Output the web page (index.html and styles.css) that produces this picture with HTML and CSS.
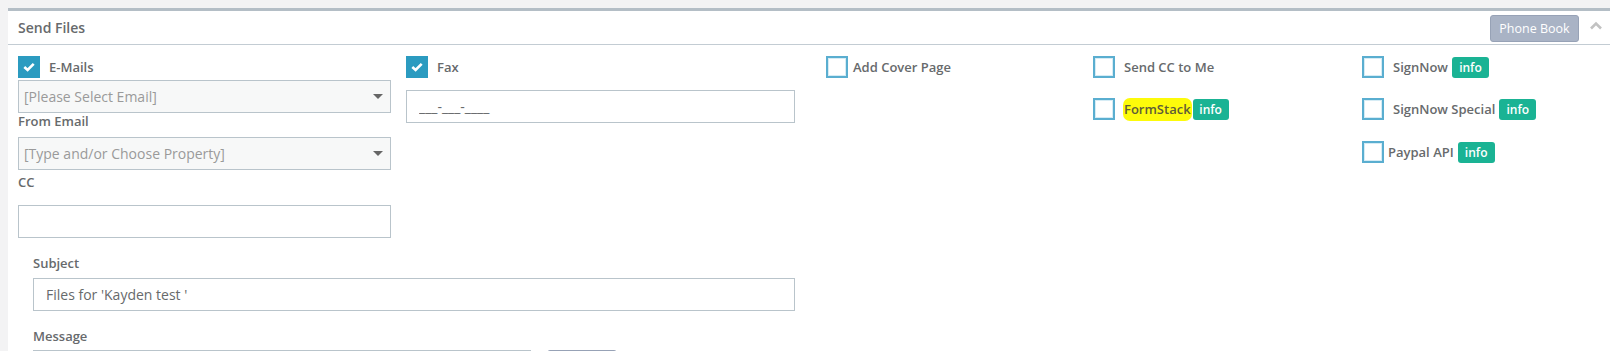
FILE: index.html
```html
<!DOCTYPE html>
<html lang="en">
<head>
  <meta charset="UTF-8">
  <meta name="viewport" content="width=device-width, initial-scale=1.0">
  <title>Send Files</title>
  <link rel="stylesheet" href="styles.css">
</head>
<body>
  <div class="panel">
    <div class="panel-head">
      <h5>Send Files</h5>
      <div class="tools">
        <button class="btn-gray">Phone Book</button>
        <svg class="collapse" width="14" height="9" viewBox="0 0 14 9"><polyline points="2,7.5 7,2.5 12,7.5" fill="none" stroke="#c2c2c2" stroke-width="2.6"/></svg>
      </div>
    </div>

    <div class="panel-body">
      <div class="options">
        <!-- E-Mails -->
        <div class="col col-email">
          <label class="check">
            <span class="box on"><svg width="12" height="10" viewBox="0 0 12 10"><polyline points="1.3,5 4.6,8 10.7,1.8" fill="none" stroke="#fff" stroke-width="2.6"/></svg></span>
            <span class="txt">E-Mails</span>
          </label>
          <div class="select">
            <span>[Please Select Email]</span>
            <svg width="10" height="6" viewBox="0 0 10 6"><polygon points="0,0 10,0 5,5" fill="#666"/></svg>
          </div>
          <div class="field-label">From Email</div>
          <div class="select">
            <span>[Type and/or Choose Property]</span>
            <svg width="10" height="6" viewBox="0 0 10 6"><polygon points="0,0 10,0 5,5" fill="#666"/></svg>
          </div>
          <div class="field-label cc">CC</div>
          <input class="text cc-input" type="text">
        </div>

        <!-- Fax -->
        <div class="col col-fax">
          <label class="check">
            <span class="box on"><svg width="12" height="10" viewBox="0 0 12 10"><polyline points="1.3,5 4.6,8 10.7,1.8" fill="none" stroke="#fff" stroke-width="2.6"/></svg></span>
            <span class="txt">Fax</span>
          </label>
          <input class="text fax-input" type="text" value="___-___-____">
        </div>

        <div class="col col-cover">
          <label class="check tight">
            <span class="box"></span>
            <span class="txt">Add Cover Page</span>
          </label>
        </div>

        <div class="col col-list">
          <label class="check">
            <span class="box"></span>
            <span class="txt">Send CC to Me</span>
          </label>
          <label class="check">
            <span class="box"></span>
            <span class="txt"><mark>FormStack</mark></span>
            <span class="badge flush">info</span>
          </label>
        </div>

        <div class="col col-list">
          <label class="check">
            <span class="box"></span>
            <span class="txt">SignNow</span>
            <span class="badge">info</span>
          </label>
          <label class="check">
            <span class="box"></span>
            <span class="txt">SignNow Special</span>
            <span class="badge">info</span>
          </label>
          <label class="check paypal">
            <span class="box"></span>
            <span class="txt">Paypal API</span>
            <span class="badge">info</span>
          </label>
        </div>
      </div>

      <div class="compose">
        <div class="field-label">Subject</div>
        <input class="text subject-input" type="text" value="Files for 'Kayden test '">
        <div class="field-label message-label">Message</div>
        <div class="message-row">
          <textarea class="text"></textarea>
          <button class="btn-gray attach"></button>
        </div>
      </div>
    </div>
  </div>
</body>
</html>
```

FILE: styles.css
```css
html, body {
  height: 100%;
  overflow: hidden;
}
body {
  margin: 0;
  padding: 8px 0 0 8px;
  background: #f3f3f4;
  font-family: "Open Sans", Arial, sans-serif;
  color: #676a6c;
  box-sizing: border-box;
}
.panel {
  background: #fff;
  border-top: 3px solid #b4bec6;
  min-height: 400px;
}
.panel-head {
  height: 33px;
  border-bottom: 1px solid #c3ccd3;
  display: flex;
  align-items: center;
  justify-content: space-between;
  padding: 0 0 0 10px;
}
.panel-head h5 {
  margin: 0;
  font-size: 14px;
  font-weight: 600;
  line-height: 20px;
}
.tools {
  display: flex;
  align-items: center;
  gap: 10px;
  padding-right: 7px;
}
.btn-gray {
  background: #a9b3c5;
  border: 1px solid #97a2b6;
  border-radius: 3px;
  color: #fff;
  font-family: "Open Sans", Arial, sans-serif;
  font-size: 12.5px;
  height: 27px;
  width: 89px;
  padding: 0;
  margin-top: 1px;
}
.collapse {
  display: block;
  margin-top: -4px;
}

.panel-body {
  padding: 11px 0 0 10px;
}
.options {
  display: grid;
  grid-template-columns: 388px 420px 267px 269px 1fr;
}
.col {
  display: flex;
  flex-direction: column;
}
.col-list {
  gap: 20px;
}

.check {
  display: flex;
  align-items: center;
  height: 22px;
  font-size: 13px;
  font-weight: 600;
}
.box {
  width: 22px;
  height: 22px;
  box-sizing: border-box;
  border: 2px solid #5aaed0;
  box-shadow: inset 0 0 0 1px #d6ecf5;
  background: #fff;
  display: flex;
  align-items: center;
  justify-content: center;
  flex: none;
}
.box.on {
  background: #2b9bc0;
  border-color: #2b9bc0;
  box-shadow: none;
}
.txt {
  margin-left: 9px;
  line-height: 22px;
}
.tight .txt {
  margin-left: 5px;
}
.paypal {
  margin-top: 1px;
}
.paypal .txt {
  margin-left: 4px;
}
mark {
  background: #fdfb0a;
  color: #5f5d38;
  border-radius: 7px;
  padding: 2px 1px 3px 1px;
  margin-left: -1px;
}
.badge {
  background: #1ab394;
  color: #fff;
  font-size: 12px;
  font-weight: 600;
  line-height: 21px;
  height: 21px;
  width: 37px;
  text-align: center;
  border-radius: 3px;
  margin-left: 4px;
}
.badge.flush {
  margin-left: 1px;
  width: 36px;
}

.select {
  margin-top: 2px;
  width: 373px;
  height: 33px;
  box-sizing: border-box;
  border: 1px solid #b9c4cb;
  background: #f7f8f8;
  display: flex;
  align-items: center;
  justify-content: space-between;
  padding: 0 7px 0 5px;
  font-size: 14px;
  color: #9a9a9a;
}
.select svg {
  margin-top: 1px;
}
.field-label {
  font-size: 13px;
  font-weight: 600;
  line-height: 17px;
  height: 17px;
}
.col-email .select + .field-label + .select {
  margin-top: 7px;
}
.field-label.cc {
  margin-top: 4px;
}

.text {
  box-sizing: border-box;
  height: 33px;
  border: 1px solid #b9c4cb;
  background: #fff;
  font-family: "Open Sans", Arial, sans-serif;
  font-size: 14px;
  color: #676a6c;
  padding: 0 12px;
  outline: none;
  margin: 0;
}
.cc-input {
  margin-top: 14px;
  width: 373px;
}
.fax-input {
  margin-top: 12px;
  width: 389px;
}

.compose {
  margin-left: 15px;
  width: 762px;
  display: flex;
  flex-direction: column;
  padding-top: 17px;
}
.subject-input {
  margin-top: 6px;
  width: 762px;
}
.message-label {
  margin-top: 17px;
}
.message-row {
  display: flex;
  gap: 16px;
  margin-top: 5px;
}
.message-row textarea {
  width: 498px;
  height: 90px;
  resize: none;
}
.attach {
  width: 70px;
  height: 30px;
  margin-top: 0;
}
```
